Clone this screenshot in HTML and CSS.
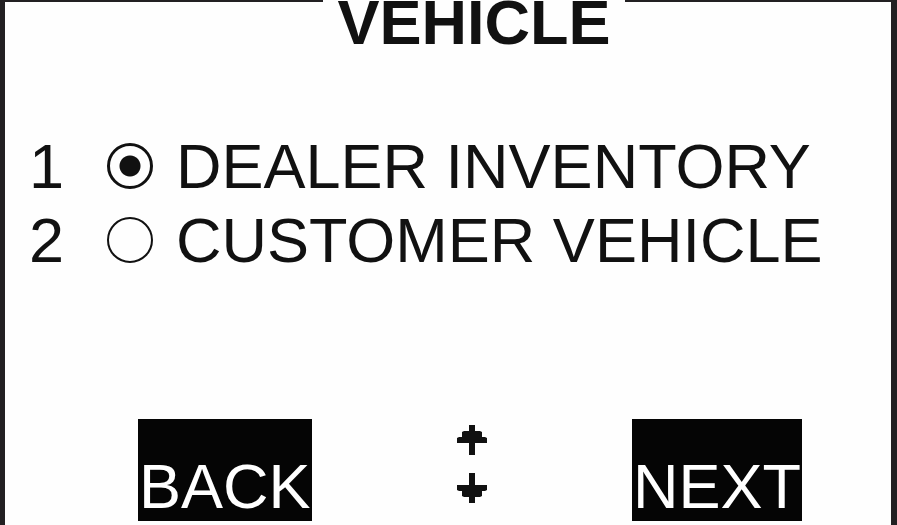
FILE: index.html
```html
<!DOCTYPE html>
<html lang="en">
<head>
<meta charset="utf-8">
<meta name="viewport" content="width=device-width, initial-scale=1">
<title>Vehicle</title>
<link rel="stylesheet" href="styles.css">
</head>
<body>
<main class="screen">
  <h1 class="title">VEHICLE</h1>
  <form class="options">
    <div class="option">
      <span class="number">1</span>
      <input class="radio" type="radio" name="source" id="dealer" checked>
      <label class="label" for="dealer">DEALER INVENTORY</label>
    </div>
    <div class="option">
      <span class="number">2</span>
      <input class="radio" type="radio" name="source" id="customer">
      <label class="label" for="customer">CUSTOMER VEHICLE</label>
    </div>
  </form>
  <nav class="actions">
    <button class="action" type="button">BACK</button>
    <div class="arrows">
      <button class="arrow" type="button" aria-label="Up">
        <svg viewBox="0 0 30 30" width="30" height="30"><path d="M12 30V18H0V13L2 12H5V7L7 6H12V0H18V6H23L25 7V12H28L30 13V18H18V30Z"/></svg>
      </button>
      <button class="arrow" type="button" aria-label="Down">
        <svg viewBox="0 0 30 30" width="30" height="30"><path d="M12 0V12H0V17L2 18H5V23L7 24H12V30H18V24H23L25 23V18H28L30 17V12H18V0Z"/></svg>
      </button>
    </div>
    <button class="action" type="button">NEXT</button>
  </nav>
</main>
</body>
</html>
```

FILE: styles.css
```css
* {
  box-sizing: border-box;
}

body {
  margin: 0;
  font-family: "Liberation Sans", Arial, sans-serif;
  color: #111;
}

.screen {
  display: flex;
  flex-direction: column;
  min-height: 100vh;
  padding: 0 24px 4px;
  border: solid #222022;
  border-width: 2px 6px 0 5px;
  background: #fefefe;
}

.title {
  align-self: center;
  margin: -16px 0 0 52px;
  padding: 0 14px;
  font-size: 63px;
  line-height: 72px;
  background: #fefefe;
}

.options {
  margin-top: 71px;
}

.option {
  display: flex;
  align-items: center;
  font-size: 63px;
  line-height: 74px;
  white-space: nowrap;
}

.number {
  flex: none;
  width: 78px;
}

.radio {
  flex: none;
  appearance: none;
  width: 46px;
  height: 46px;
  margin: 0 23px 0 0;
  border: 2px solid #111;
  border-radius: 50%;
}

.radio:checked {
  border-width: 3px;
  background: radial-gradient(circle, #111 10px, transparent 11px);
}

.actions {
  display: flex;
  justify-content: space-between;
  margin-top: auto;
  padding: 0 65px 0 109px;
}

.action {
  height: 102px;
  padding: 31px 1px 0;
  border: 0;
  font: 63px/70px "Liberation Sans", Arial, sans-serif;
  color: #fff;
  background: #050505;
}

.arrows {
  display: flex;
  flex-direction: column;
  gap: 18px;
  padding-top: 6px;
}

.arrow {
  display: flex;
  padding: 0;
  border: 0;
  background: none;
}

.arrow svg {
  fill: #111;
}
```
